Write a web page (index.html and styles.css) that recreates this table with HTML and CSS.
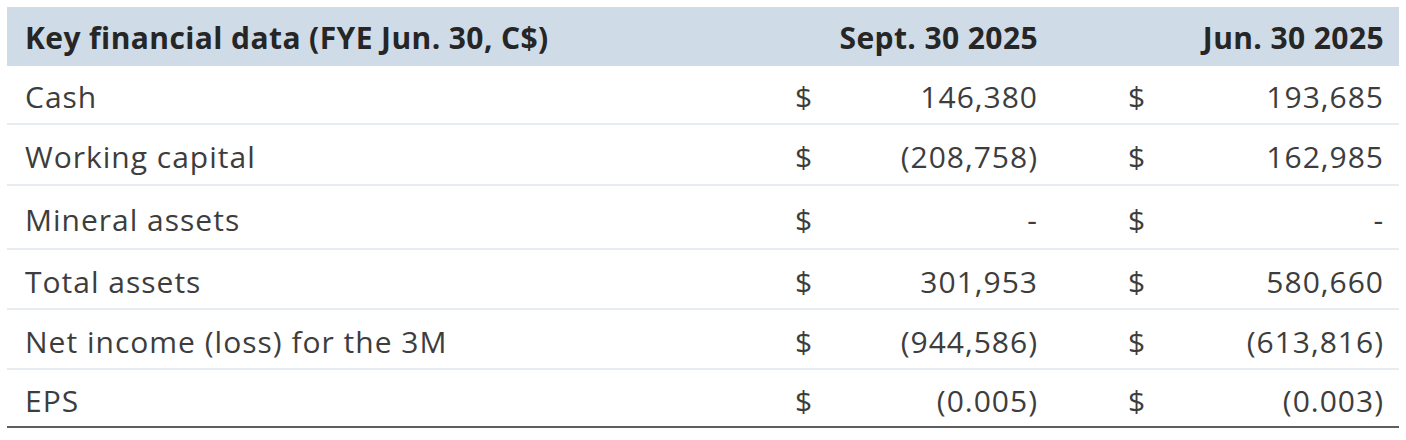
FILE: index.html
```html
<!DOCTYPE html>
<html>
<head>
<meta charset="utf-8">
<link rel="stylesheet" href="styles.css">
</head>
<body>
<table class="fin">
  <colgroup>
    <col class="c-label"><col class="c-cur"><col class="c-val1"><col class="c-cur"><col class="c-val2">
  </colgroup>
  <thead>
    <tr>
      <th class="label">Key financial data (FYE Jun. 30, C$)</th>
      <th class="val1" colspan="2">Sept. 30 2025</th>
      <th class="val2" colspan="2">Jun. 30 2025</th>
    </tr>
  </thead>
  <tbody>
    <tr class="r1"><td class="label">Cash</td><td class="cur">$</td><td class="val1">146,380</td><td class="cur">$</td><td class="val2">193,685</td></tr>
    <tr class="r2"><td class="label">Working capital</td><td class="cur">$</td><td class="val1">(208,758)</td><td class="cur">$</td><td class="val2">162,985</td></tr>
    <tr class="r3"><td class="label">Mineral assets</td><td class="cur">$</td><td class="val1">-</td><td class="cur">$</td><td class="val2">-</td></tr>
    <tr class="r4"><td class="label">Total assets</td><td class="cur">$</td><td class="val1">301,953</td><td class="cur">$</td><td class="val2">580,660</td></tr>
    <tr class="r5"><td class="label">Net income (loss) for the 3M</td><td class="cur">$</td><td class="val1">(944,586)</td><td class="cur">$</td><td class="val2">(613,816)</td></tr>
    <tr class="r6 last"><td class="label">EPS</td><td class="cur">$</td><td class="val1">(0.005)</td><td class="cur">$</td><td class="val2">(0.003)</td></tr>
  </tbody>
</table>
</body>
</html>
```

FILE: styles.css
```css
html, body {
  margin: 0;
  padding: 0;
  background: #ffffff;
}
body {
  padding: 7px 7px 0 7px;
  font-family: "Open Sans", Lato, "Liberation Sans", sans-serif;
  color: #3d3d3d;
}
.fin {
  width: 1392px;
  border-collapse: collapse;
  table-layout: fixed;
  font-size: 30px;
  letter-spacing: 1px;
}
.c-label { width: 773px; }
.c-cur { width: 60px; }
.c-val1 { width: 273px; }
.c-val2 { width: 226px; }

.fin th {
  background: #cfdbe7;
  color: #262626;
  font-weight: 700;
  font-size: 30px;
  letter-spacing: 0.4px;
  height: 59px;
  padding: 2px 0 0 0;
  box-sizing: border-box;
  vertical-align: middle;
  white-space: nowrap;
}
.fin td {
  padding: 4px 0 0 0;
  vertical-align: middle;
  border-bottom: 2px solid #e7ecf3;
  white-space: nowrap;
}
.fin .label { text-align: left; padding-left: 18px; }
.fin .cur { text-align: left; padding-left: 15px; }
.fin .val1 { text-align: right; padding-right: 75px; }
.fin .val2 { text-align: right; padding-right: 15px; }

.r1 td { height: 53px; }
.r2 td { height: 55px; }
.r3 td { height: 58px; }
.r4 td { height: 54px; }
.r5 td { height: 54px; }
.r6 td { height: 52px; }
.fin tr.last td { border-bottom: 2px solid #5e5e5e; }
```
